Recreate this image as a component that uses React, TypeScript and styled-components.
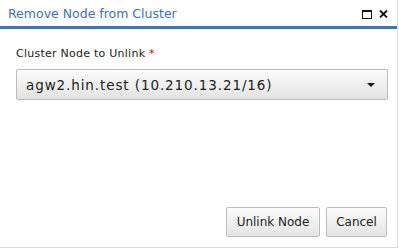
import styled, { createGlobalStyle } from "styled-components";

const Global = createGlobalStyle`
  html, body { margin: 0; padding: 0; background: #fff; }
  body { font-family: "DejaVu Sans", Verdana, sans-serif; }
`;

const Dialog = styled.div`
  box-sizing: border-box;
  width: 398px;
  height: 248px;
  border-right: 1px solid #dcdcdc;
  border-bottom: 1px solid #dcdcdc;
  display: flex;
  flex-direction: column;
  background: #fff;
`;

const TitleBar = styled.div`
  height: 26px;
  display: flex;
  align-items: center;
  justify-content: space-between;
  padding: 0 9px 0 8px;
  border-bottom: 3px solid #3a74c6;
`;

const Title = styled.span`
  font-size: 12.5px;
  color: #3a72c2;
  padding-top: 1px;
`;

const Tools = styled.div`
  display: flex;
  gap: 7px;
  align-items: center;
  padding-top: 2px;
`;

const Body = styled.div`
  flex: 1;
  display: flex;
  flex-direction: column;
  padding: 18px 9px 0 16px;
`;

const Label = styled.label`
  font-size: 11px;
  letter-spacing: 0.25px;
  color: #222;
  margin-bottom: 9px;
`;

const Star = styled.span`
  color: #d40000;
`;

const Select = styled.div`
  box-sizing: border-box;
  width: 372px;
  height: 31px;
  border: 1px solid #bdbdbd;
  border-radius: 2px;
  background: linear-gradient(#fcfcfc, #e2e2e2);
  display: flex;
  align-items: center;
  justify-content: space-between;
  padding: 0 12px 0 9px;
  font-size: 13.5px;
  letter-spacing: 0.9px;
  color: #222;
`;

const Footer = styled.div`
  display: flex;
  justify-content: flex-end;
  gap: 6px;
  padding: 0 10px 10px 0;
`;

const Button = styled.button<{ $w: number }>`
  box-sizing: border-box;
  width: ${(p) => p.$w}px;
  height: 30px;
  border: 1px solid #bdbdbd;
  border-radius: 2px;
  background: linear-gradient(#fbfbfb, #e4e4e4);
  font-family: "DejaVu Sans", Verdana, sans-serif;
  font-size: 12px;
  color: #222;
  padding: 0;
`;

export default function App() {
  return (
    <>
      <Global />
      <Dialog>
        <TitleBar>
          <Title>Remove Node from Cluster</Title>
          <Tools>
            <svg width="10" height="9" viewBox="0 0 10 9">
              <rect x="0.5" y="1" width="9" height="7.5" fill="none" stroke="#111" strokeWidth="1" />
              <rect x="0" y="0" width="10" height="2" fill="#111" />
            </svg>
            <svg width="9" height="8" viewBox="0 0 9 8">
              <path d="M1 0.5 L8 7.5 M8 0.5 L1 7.5" stroke="#111" strokeWidth="1.8" />
            </svg>
          </Tools>
        </TitleBar>
        <Body>
          <Label>
            Cluster Node to Unlink <Star>*</Star>
          </Label>
          <Select>
            <span>agw2.hin.test (10.210.13.21/16)</span>
            <svg width="8" height="4" viewBox="0 0 8 4">
              <path d="M0 0 H8 L4 4 Z" fill="#111" />
            </svg>
          </Select>
        </Body>
        <Footer>
          <Button $w={94}>Unlink Node</Button>
          <Button $w={61}>Cancel</Button>
        </Footer>
      </Dialog>
    </>
  );
}
